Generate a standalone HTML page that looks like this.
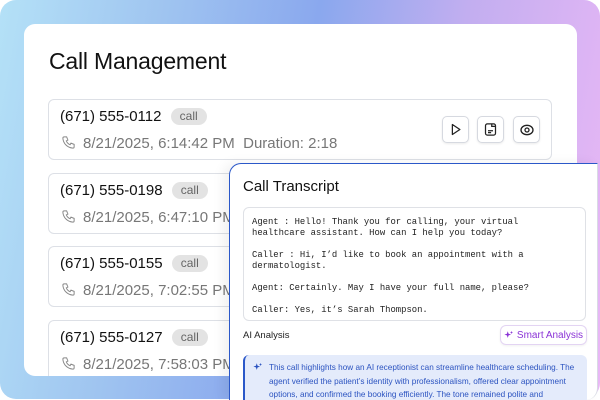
<!DOCTYPE html>
<html><head><meta charset="utf-8"><style>
*{margin:0;padding:0;box-sizing:border-box}
html,body{width:600px;height:400px;overflow:hidden}
body{background:#fff;font-family:"Liberation Sans",sans-serif;position:relative}
.bg{position:absolute;left:0;top:0;width:600px;height:399px;border-radius:16px;background:linear-gradient(100deg,#b4e1f7 0%,#9fc4f0 25%,#8aa8ee 48%,#c2aef0 70%,#ebb8f6 100%)}
.card{position:absolute;left:24px;top:24px;width:553px;height:352px;background:#fff;border-radius:11px;overflow:hidden}
h1{position:absolute;left:25px;top:24px;font-size:23px;font-weight:normal;color:#111;letter-spacing:-0.2px}
.row{position:absolute;left:24px;width:504px;height:61px;border:1px solid #dde0e6;border-radius:6px;background:#fff}
.ph{position:absolute;left:11px;top:8px;font-size:15px;color:#111}
.tag{display:inline-block;background:#e3e3e3;color:#666;font-size:12px;border-radius:9px;padding:1px 9px 2px;margin-left:5px;vertical-align:1px}
.dt{position:absolute;left:12px;top:35px;font-size:15px;color:#777;white-space:nowrap}
.dt svg{vertical-align:-2px;margin-right:7px}
.btn{position:absolute;top:16px;width:27px;height:27px;border:1px solid #d6d9e0;border-radius:5px;background:#fff;box-shadow:0 1px 2px rgba(0,0,0,.08);display:flex;align-items:center;justify-content:center}
.panel{position:absolute;left:229px;top:163px;width:369px;height:237px;background:#fff;border-top:1.5px solid #2b58c9;border-left:1.5px solid #2b58c9;border-right:1px solid #d8dbe4;border-radius:12px 0 12px 0;box-shadow:-6px 0 12px rgba(0,0,0,.06);overflow:hidden}
.panel h2{position:absolute;left:13px;top:14px;font-size:15px;font-weight:normal;color:#111}
.tx{position:absolute;left:13px;top:43px;width:343px;height:114px;border:1px solid #dfe1e6;border-radius:6px;padding:9px 8px;font-family:"Liberation Mono",monospace;font-size:8.9px;line-height:11px;color:#222;white-space:pre}
.ai{position:absolute;left:13px;top:166px;font-size:9.5px;color:#222}
.sa{position:absolute;left:270px;top:161px;width:87px;height:20px;border:1px solid #e3d4f3;border-radius:6px;color:#8a33d6;font-size:10px;display:flex;align-items:center;justify-content:center;box-shadow:0 1px 2px rgba(0,0,0,.06)}
.an{position:absolute;left:13px;top:191px;width:344px;height:60px;background:#e4ebfb;border-left:2px solid #2b58c9;border-radius:6px 6px 0 0;padding:6px 0 0 24px;color:#2b53c0;font-size:8.2px;line-height:13.5px;white-space:nowrap}
.an svg{position:absolute;left:8px;top:7px}
</style></head><body>
<div class="bg"></div>
<div class="card">
<h1>Call Management</h1>
<div class="row" style="top:75px"><div class="ph">(671) 555-0112 <span class="tag">call</span></div>
<div class="dt"><svg width="15" height="15" viewBox="0 0 24 24" fill="none" stroke="#888" stroke-width="1.6"><path d="M5 3h4l2 5-2.5 1.5a11 11 0 0 0 6 6L16 13l5 2v4a2 2 0 0 1-2 2A17 17 0 0 1 3 5a2 2 0 0 1 2-2"/></svg>8/21/2025, 6:14:42 PM &nbsp;Duration: 2:18</div>
<div class="btn" style="left:393px"><svg width="15" height="15" viewBox="0 0 24 24" fill="none" stroke="#222" stroke-width="2"><path d="M7 4v16l12-8z" stroke-linejoin="round"/></svg></div>
<div class="btn" style="left:428px"><svg width="15" height="15" viewBox="0 0 24 24" fill="none" stroke="#222" stroke-width="2"><rect x="4" y="3" width="16" height="18" rx="3"/><path d="M8 14h8M8 17h5M14 3v4h6"/></svg></div>
<div class="btn" style="left:464px"><svg width="16" height="16" viewBox="0 0 24 24" fill="none" stroke="#222" stroke-width="2"><ellipse cx="12" cy="12" rx="9" ry="7"/><circle cx="12" cy="12" r="3"/></svg></div>
</div>
<div class="row" style="top:149px"><div class="ph">(671) 555-0198 <span class="tag">call</span></div>
<div class="dt"><svg width="15" height="15" viewBox="0 0 24 24" fill="none" stroke="#888" stroke-width="1.6"><path d="M5 3h4l2 5-2.5 1.5a11 11 0 0 0 6 6L16 13l5 2v4a2 2 0 0 1-2 2A17 17 0 0 1 3 5a2 2 0 0 1 2-2"/></svg>8/21/2025, 6:47:10 PM</div></div>
<div class="row" style="top:222px"><div class="ph">(671) 555-0155 <span class="tag">call</span></div>
<div class="dt"><svg width="15" height="15" viewBox="0 0 24 24" fill="none" stroke="#888" stroke-width="1.6"><path d="M5 3h4l2 5-2.5 1.5a11 11 0 0 0 6 6L16 13l5 2v4a2 2 0 0 1-2 2A17 17 0 0 1 3 5a2 2 0 0 1 2-2"/></svg>8/21/2025, 7:02:55 PM</div></div>
<div class="row" style="top:296px"><div class="ph">(671) 555-0127 <span class="tag">call</span></div>
<div class="dt"><svg width="15" height="15" viewBox="0 0 24 24" fill="none" stroke="#888" stroke-width="1.6"><path d="M5 3h4l2 5-2.5 1.5a11 11 0 0 0 6 6L16 13l5 2v4a2 2 0 0 1-2 2A17 17 0 0 1 3 5a2 2 0 0 1 2-2"/></svg>8/21/2025, 7:58:03 PM</div></div>
</div>
<div class="panel">
<h2>Call Transcript</h2>
<div class="tx">Agent : Hello! Thank you for calling, your virtual
healthcare assistant. How can I help you today?

Caller : Hi, I’d like to book an appointment with a
dermatologist.

Agent: Certainly. May I have your full name, please?

Caller: Yes, it’s Sarah Thompson.</div>
<div class="ai">AI Analysis</div>
<div class="sa"><svg width="10" height="10" viewBox="0 0 24 24" fill="#8a33d6" style="margin-right:3px"><path d="M9 3l2 6 6 2-6 2-2 6-2-6-6-2 6-2zM18 2l1 3 3 1-3 1-1 3-1-3-3-1 3-1z"/></svg>Smart Analysis</div>
<div class="an"><svg width="10" height="10" viewBox="0 0 24 24" fill="#2b53c0"><path d="M9 3l2 6 6 2-6 2-2 6-2-6-6-2 6-2zM18 2l1 3 3 1-3 1-1 3-1-3-3-1 3-1z"/></svg>This call highlights how an AI receptionist can streamline healthcare scheduling. The<br>agent verified the patient’s identity with professionalism, offered clear appointment<br>options, and confirmed the booking efficiently. The tone remained polite and</div>
</div>
</body></html>
